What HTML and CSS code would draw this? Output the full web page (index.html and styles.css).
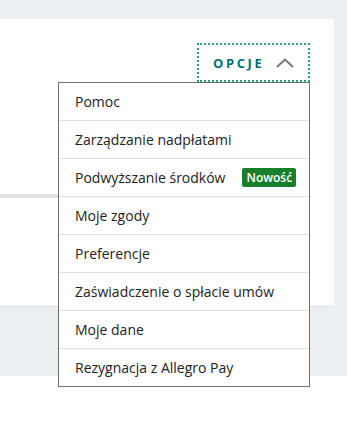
FILE: index.html
```html
<!DOCTYPE html>
<html>
  <head>
    <link rel="stylesheet" href="styles.css">
  </head>
  <body>
    <div class="page">
      <div class="card">
        <div class="card-header">
          <div class="options">
            <button class="options-toggle">
              <span class="options-label">OPCJE</span>
              <svg class="chevron" width="18" height="10" viewBox="0 0 18 10">
                <polyline points="1,9 9,1.5 17,9" fill="none" stroke="#767676" stroke-width="2" />
              </svg>
            </button>
            <ul class="options-menu">
              <li class="menu-item">Pomoc</li>
              <li class="menu-item">Zarządzanie nadpłatami</li>
              <li class="menu-item">Podwyższanie środków <span class="badge">Nowość</span></li>
              <li class="menu-item">Moje zgody</li>
              <li class="menu-item">Preferencje</li>
              <li class="menu-item">Zaświadczenie o spłacie umów</li>
              <li class="menu-item">Moje dane</li>
              <li class="menu-item">Rezygnacja z Allegro Pay</li>
            </ul>
          </div>
        </div>
        <div class="progress"></div>
      </div>
    </div>
  </body>
</html>
```

FILE: styles.css
```css
html,
body {
  min-height: 100vh;
}
body {
  margin: 0;
  font-family: 'Open Sans', sans-serif;
  background: #fff;
  color: #222;
}
.page {
  background: #eceff1;
  padding: 19px 13px 71px 0;
}
.card {
  background: #fff;
  height: 286px;
}
.card-header {
  display: flex;
  justify-content: flex-end;
  padding: 24px 24px 0 0;
}
.options {
  position: relative;
}
.options-toggle {
  display: flex;
  align-items: center;
  gap: 12px;
  height: 39px;
  width: 113px;
  padding: 0 0 0 14px;
  background: #fff;
  border: 2px dotted #2a9d8a;
  font-family: 'Open Sans', sans-serif;
  cursor: pointer;
}
.options-label {
  font-size: 13px;
  font-weight: 700;
  letter-spacing: 2.6px;
  color: #00707a;
}
.chevron {
  display: block;
}
.options-menu {
  position: absolute;
  top: 39px;
  right: 0;
  width: 250px;
  margin: 0;
  padding: 0;
  list-style: none;
  background: #fff;
  border: 1px solid #707070;
  z-index: 2;
}
.menu-item {
  display: flex;
  align-items: center;
  gap: 17px;
  height: 37px;
  padding: 0 16px;
  font-size: 14px;
  white-space: nowrap;
  border-top: 1px solid #e0e0e0;
}
.menu-item:first-child {
  border-top: none;
}
.badge {
  background: #157f2b;
  color: #fff;
  font-size: 12px;
  font-weight: 600;
  line-height: 19px;
  padding: 0 4px;
  border-radius: 2px;
}
.progress {
  margin-top: 112px;
  height: 4px;
  width: 60%;
  background: #e0e0e0;
}
```
